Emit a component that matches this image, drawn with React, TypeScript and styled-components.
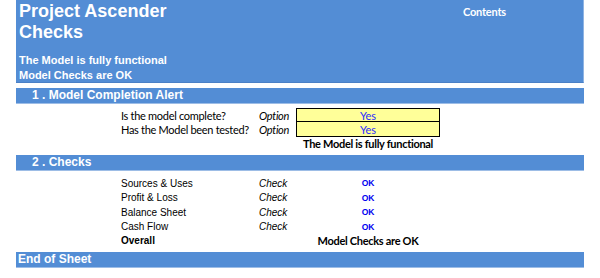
import React from 'react'
import styled, { createGlobalStyle } from 'styled-components'

const BLUE = '#538dd5'
const CALIBRI = "Lato, 'Open Sans', sans-serif"
const ARIAL = "'Liberation Sans', Arial, sans-serif"

const GlobalStyle = createGlobalStyle`
  html, body {
    margin: 0;
    padding: 0;
    background: #ffffff;
  }
`

const Sheet = styled.div`
  width: 568px;
  padding-left: 16px;
  display: flex;
  flex-direction: column;
`

const Header = styled.div`
  height: 83px;
  box-sizing: border-box;
  background: ${BLUE};
  border-bottom: 1px solid #4a80c6;
  border-right: 1px solid #8fb4e3;
  display: grid;
  grid-template-columns: 1fr 120px;
  color: #ffffff;
`

const TitleBlock = styled.div`
  padding: 1px 0 0 3px;
  display: flex;
  flex-direction: column;
`

const Title = styled.div`
  font-family: ${ARIAL};
  font-weight: bold;
  font-size: 18px;
  line-height: 21px;
`

const Subtitle = styled.div`
  margin-top: 10px;
  font-family: ${ARIAL};
  font-weight: bold;
  font-size: 11px;
  line-height: 15px;
`

const ContentsLink = styled.div`
  padding-top: 5px;
  font-family: ${CALIBRI};
  font-weight: bold;
  font-size: 11px;
  line-height: 14px;
  letter-spacing: -0.2px;
`

const SectionBar = styled.div<{ $top: number; $indent?: boolean }>`
  margin-top: ${({ $top }) => $top}px;
  height: 16px;
  box-sizing: border-box;
  background: ${BLUE};
  border-bottom: 1px solid #9dbde6;
  padding-left: ${({ $indent }) => ($indent ? 16 : 2)}px;
  font-family: ${ARIAL};
  font-weight: bold;
  font-size: 12px;
  line-height: 15px;
  color: #ffffff;
`

const Rows = styled.div<{ $top: number }>`
  margin-top: ${({ $top }) => $top}px;
  display: grid;
  grid-template-columns: 105px 138px 37px 144px;
  grid-auto-rows: 14.4px;
  align-items: center;
`

const Label = styled.div<{ $arial?: boolean; $bold?: boolean }>`
  grid-column: 2;
  font-family: ${({ $arial }) => ($arial ? ARIAL : CALIBRI)};
  font-weight: ${({ $bold }) => ($bold ? 'bold' : 'normal')};
  font-size: ${({ $arial }) => ($arial ? 10 : 11)}px;
  letter-spacing: ${({ $arial }) => ($arial ? 0 : -0.3)}px;
  color: #000000;
  white-space: nowrap;
`

const Kind = styled.div<{ $arial?: boolean }>`
  grid-column: 3;
  font-family: ${({ $arial }) => ($arial ? ARIAL : CALIBRI)};
  font-style: italic;
  font-size: ${({ $arial }) => ($arial ? 10 : 11)}px;
  letter-spacing: ${({ $arial }) => ($arial ? 0 : -0.3)}px;
  color: #000000;
`

const InputCell = styled.div<{ $first?: boolean }>`
  grid-column: 4;
  height: 100%;
  box-sizing: border-box;
  background: #ffff99;
  border: 1px solid #000000;
  border-top-width: ${({ $first }) => ($first ? 1 : 0)}px;
  display: flex;
  align-items: center;
  justify-content: center;
  font-family: ${CALIBRI};
  font-size: 11px;
  color: #2b2bff;
`

const Result = styled.div`
  grid-column: 4;
  text-align: center;
  font-family: ${CALIBRI};
  font-weight: bold;
  font-size: 11px;
  letter-spacing: -0.3px;
  color: #000000;
  white-space: nowrap;
`

const Ok = styled.div`
  grid-column: 4;
  text-align: center;
  font-family: ${ARIAL};
  font-weight: bold;
  font-size: 8.5px;
  color: #0000f0;
`

const questions = ['Is the model complete?', 'Has the Model been tested?']
const checks = ['Sources & Uses', 'Profit & Loss', 'Balance Sheet', 'Cash Flow']

export default function App() {
  return (
    <>
      <GlobalStyle />
      <Sheet>
        <Header>
          <TitleBlock>
            <Title>Project Ascender</Title>
            <Title>Checks</Title>
            <Subtitle>
              The Model is fully functional
              <br />
              Model Checks are OK
            </Subtitle>
          </TitleBlock>
          <ContentsLink>Contents</ContentsLink>
        </Header>

        <SectionBar $top={5} $indent>
          1 . Model Completion Alert
        </SectionBar>
        <Rows $top={4}>
          {questions.map((q, i) => (
            <React.Fragment key={q}>
              <Label>{q}</Label>
              <Kind>Option</Kind>
              <InputCell $first={i === 0}>Yes</InputCell>
            </React.Fragment>
          ))}
          <Result>The Model is fully functional</Result>
        </Rows>

        <SectionBar $top={4} $indent>
          2 . Checks
        </SectionBar>
        <Rows $top={5}>
          {checks.map((c) => (
            <React.Fragment key={c}>
              <Label $arial>{c}</Label>
              <Kind $arial>Check</Kind>
              <Ok>OK</Ok>
            </React.Fragment>
          ))}
          <Label $arial $bold>
            Overall
          </Label>
          <Result>Model Checks are OK</Result>
        </Rows>

        <SectionBar $top={4}>End of Sheet</SectionBar>
      </Sheet>
    </>
  )
}
